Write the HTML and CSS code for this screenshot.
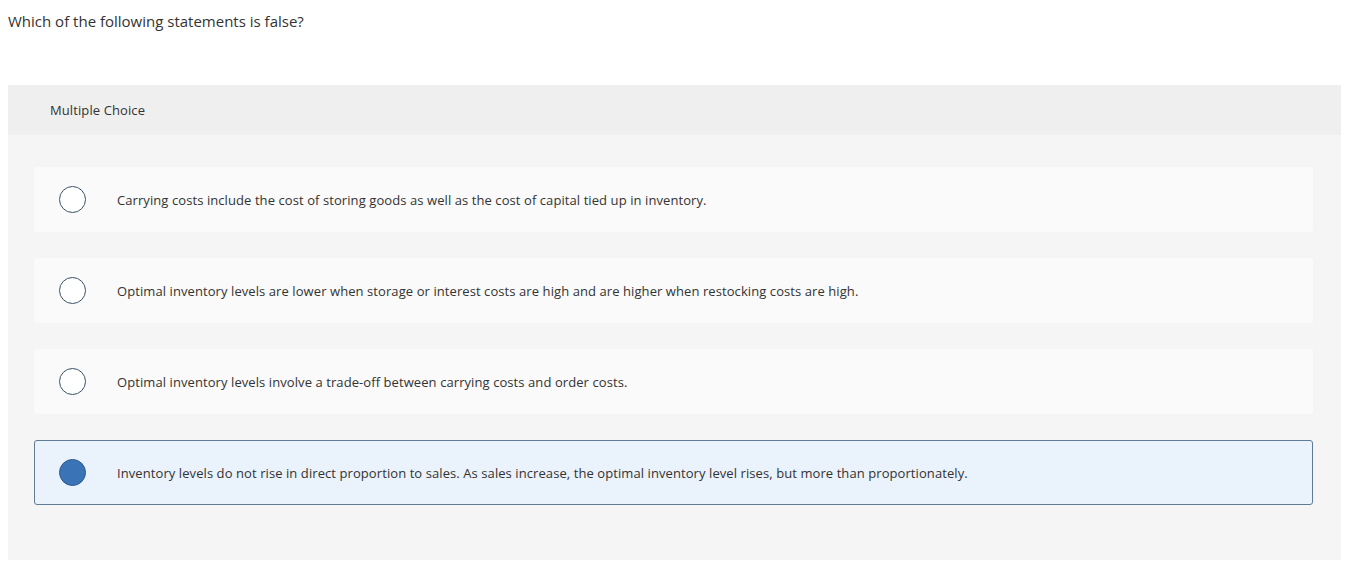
FILE: index.html
```html
<!DOCTYPE html>
<html>
<head>
<meta charset="utf-8">
<link rel="stylesheet" href="styles.css">
</head>
<body>
<div class="question">Which of the following statements is false?</div>
<div class="panel">
  <div class="panel-head">Multiple Choice</div>
  <div class="options">
    <div class="option">
      <span class="radio"></span>
      <span class="label">Carrying costs include the cost of storing goods as well as the cost of capital tied up in inventory.</span>
    </div>
    <div class="option">
      <span class="radio"></span>
      <span class="label">Optimal inventory levels are lower when storage or interest costs are high and are higher when restocking costs are high.</span>
    </div>
    <div class="option">
      <span class="radio"></span>
      <span class="label">Optimal inventory levels involve a trade-off between carrying costs and order costs.</span>
    </div>
    <div class="option selected">
      <span class="radio"></span>
      <span class="label">Inventory levels do not rise in direct proportion to sales. As sales increase, the optimal inventory level rises, but more than proportionately.</span>
    </div>
  </div>
</div>
</body>
</html>
```

FILE: styles.css
```css
html, body {
  margin: 0;
  padding: 0;
  background: #ffffff;
}
body {
  padding: 0 24px 0 8px;
  font-family: "Open Sans", Lato, "Liberation Sans", sans-serif;
  color: #333333;
}
.question {
  font-size: 15px;
  line-height: 20px;
  padding-top: 11px;
  height: 74px;
  color: #333;
}
.panel {
  background: #f5f5f5;
  height: 475px;
}
.panel-head {
  background: #efefef;
  height: 50px;
  display: flex;
  align-items: center;
  padding-left: 42px;
  font-size: 13px;
  letter-spacing: 0.1px;
  color: #333;
}
.options {
  padding: 32px 28px 0 26px;
  display: flex;
  flex-direction: column;
  gap: 26px;
}
.option {
  height: 65px;
  background: #fafafa;
  display: flex;
  align-items: center;
  box-sizing: border-box;
  border: 1px solid transparent;
  border-radius: 3px;
}
.radio {
  width: 25px;
  height: 25px;
  border: 1.5px solid #3a5268;
  border-radius: 50%;
  margin-left: 24px;
  margin-right: 31px;
  flex: none;
  background: #fff;
}
.label {
  font-size: 13px;
  letter-spacing: 0.08px;
  padding-top: 1px;
  color: #333;
}
.option.selected {
  background: #eaf2fc;
  border-color: #5f7b96;
}
.option.selected .radio {
  background: #3a74b7;
  border-color: #2c5a8e;
}
```
